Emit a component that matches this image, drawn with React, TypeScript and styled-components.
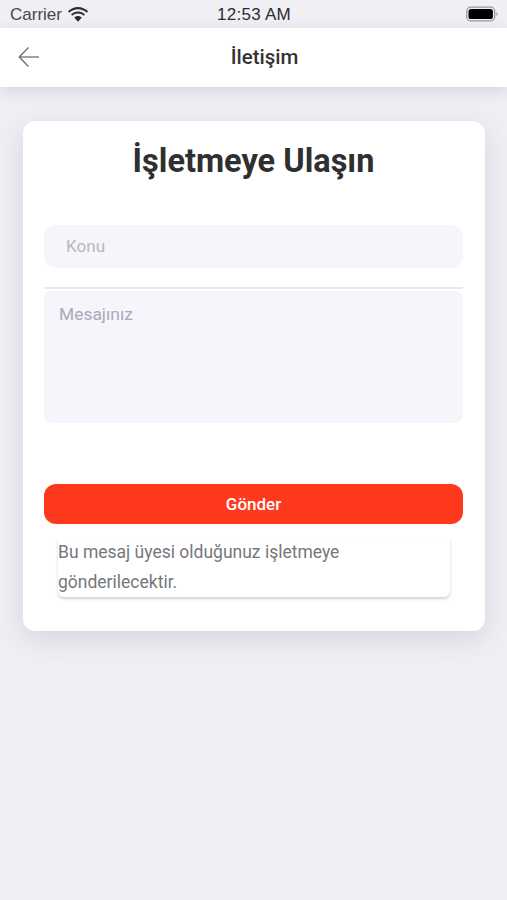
import styled, { createGlobalStyle } from 'styled-components'

const GlobalStyle = createGlobalStyle`
  html,
  body {
    margin: 0;
    padding: 0;
    background: #efeff4;
  }

  * {
    box-sizing: border-box;
  }
`

const Screen = styled.div`
  width: 507px;
  height: 900px;
  background: #efeff4;
  font-family: Roboto, 'Liberation Sans', sans-serif;
  overflow: hidden;
`

const StatusBar = styled.div`
  height: 28px;
  padding: 1px 9px 0 10px;
  display: grid;
  grid-template-columns: 1fr auto 1fr;
  align-items: center;
  font-family: 'Liberation Sans', Arial, sans-serif;
  font-size: 17px;
  color: #48484a;
`

const Carrier = styled.div`
  display: flex;
  align-items: center;
  gap: 6px;
`

const Clock = styled.div`
  font-size: 17px;
  letter-spacing: 0.25px;
  color: #2c2c2e;
`

const BatteryWrap = styled.div`
  justify-self: end;
  display: flex;
  margin-top: -1px;
`

const NavBar = styled.header`
  position: relative;
  height: 59px;
  padding-left: 22px;
  background: #fff;
  display: flex;
  align-items: center;
  justify-content: center;
  box-shadow: 0 4px 14px rgba(60, 60, 80, 0.14);
`

const BackButton = styled.button`
  position: absolute;
  left: 18px;
  top: 18px;
  width: 22px;
  height: 22px;
  padding: 0;
  border: 0;
  background: none;
  display: flex;
`

const NavTitle = styled.h1`
  margin: 0 0 2px;
  font-size: 20.5px;
  font-weight: 500;
  color: #333;
`

const Card = styled.main`
  margin: 34px 22px 0 23px;
  height: 510px;
  padding: 19px 22px 0 21px;
  background: #fff;
  border-radius: 12px;
  box-shadow: 0 8px 28px rgba(60, 60, 80, 0.14);
`

const Heading = styled.h2`
  margin: 0 0 43px;
  height: 42px;
  line-height: 42px;
  text-align: center;
  font-size: 32.5px;
  font-weight: 700;
  color: #2f2f2f;
`

const SubjectField = styled.div`
  height: 43px;
  padding: 0 0 2px 22px;
  display: flex;
  align-items: center;
  background: #f5f5fb;
  border-radius: 12px;
  font-size: 17.2px;
  color: #b9b9c0;
`

const Divider = styled.div`
  height: 2px;
  margin: 19px 0 2px;
  background: #e8e8ea;
`

const MessageField = styled.div`
  height: 132px;
  padding: 13px 15px;
  background: #f5f5fb;
  border-radius: 8px;
  font-size: 17.4px;
  line-height: 20px;
  color: #a9a9bb;
`

const SubmitButton = styled.button`
  display: block;
  width: 100%;
  height: 40px;
  margin-top: 61px;
  border: 0;
  border-radius: 12px;
  background: #ff391e;
  color: #fff;
  font-family: inherit;
  font-size: 17px;
  font-weight: 500;
`

const Notice = styled.p`
  margin: 13px 13px 0 14px;
  height: 60px;
  border-radius: 0 0 6px 6px;
  background: #fff;
  box-shadow: 0 2px 3px rgba(0, 0, 0, 0.18);
  font-size: 17.5px;
  line-height: 30px;
  color: #77777a;
`

const WifiIcon = () => (
  <svg width="20" height="15" viewBox="0 0 20 15" fill="#2c2c2e">
    <path d="M10 2.2c3.4 0 6.5 1.3 8.8 3.5l1.2-1.4C17.3 1.7 13.8 0 10 0S2.7 1.7 0 4.3l1.2 1.4C3.5 3.5 6.6 2.2 10 2.2z" />
    <path d="M10 6.6c2.2 0 4.2.8 5.7 2.2l1.3-1.4C15.100 5.600 12.700 4.500 10 4.500S4.900 5.600 3 7.400l1.300 1.400C5.800 7.400 7.800 6.600 10 6.600z" />
    <path d="M10 9c-1.500 0-2.800.6-3.800 1.500L10 14.800l3.800-4.300C12.800 9.600 11.500 9 10 9z" />
  </svg>
)

const BatteryIcon = () => (
  <svg width="32" height="16" viewBox="0 0 32 16">
    <rect x="0.700" y="1.200" width="28" height="13.600" rx="4" fill="none" stroke="#9a9a9c" strokeWidth="1.300" />
    <rect x="2.500" y="3" width="24.400" height="10" rx="2.600" fill="#000" />
    <path d="M30.300 6v4c.8-.3 1.300-1.100 1.300-2s-.5-1.700-1.300-2z" fill="#a5a5a7" />
  </svg>
)

const BackIcon = () => (
  <svg width="22" height="22" viewBox="0 0 22 22" fill="none" stroke="#666" strokeWidth="1.200">
    <path d="M21 11H1.500" />
    <path d="M10.500 1.500L1.200 11l9.300 9.500" />
  </svg>
)

export default function App() {
  return (
    <Screen>
      <GlobalStyle />
      <StatusBar>
        <Carrier>
          Carrier
          <WifiIcon />
        </Carrier>
        <Clock>12:53 AM</Clock>
        <BatteryWrap>
          <BatteryIcon />
        </BatteryWrap>
      </StatusBar>
      <NavBar>
        <BackButton aria-label="Geri">
          <BackIcon />
        </BackButton>
        <NavTitle>İletişim</NavTitle>
      </NavBar>
      <Card>
        <Heading>İşletmeye Ulaşın</Heading>
        <SubjectField>Konu</SubjectField>
        <Divider />
        <MessageField>Mesajınız</MessageField>
        <SubmitButton>Gönder</SubmitButton>
        <Notice>Bu mesaj üyesi olduğunuz işletmeye gönderilecektir.</Notice>
      </Card>
    </Screen>
  )
}
